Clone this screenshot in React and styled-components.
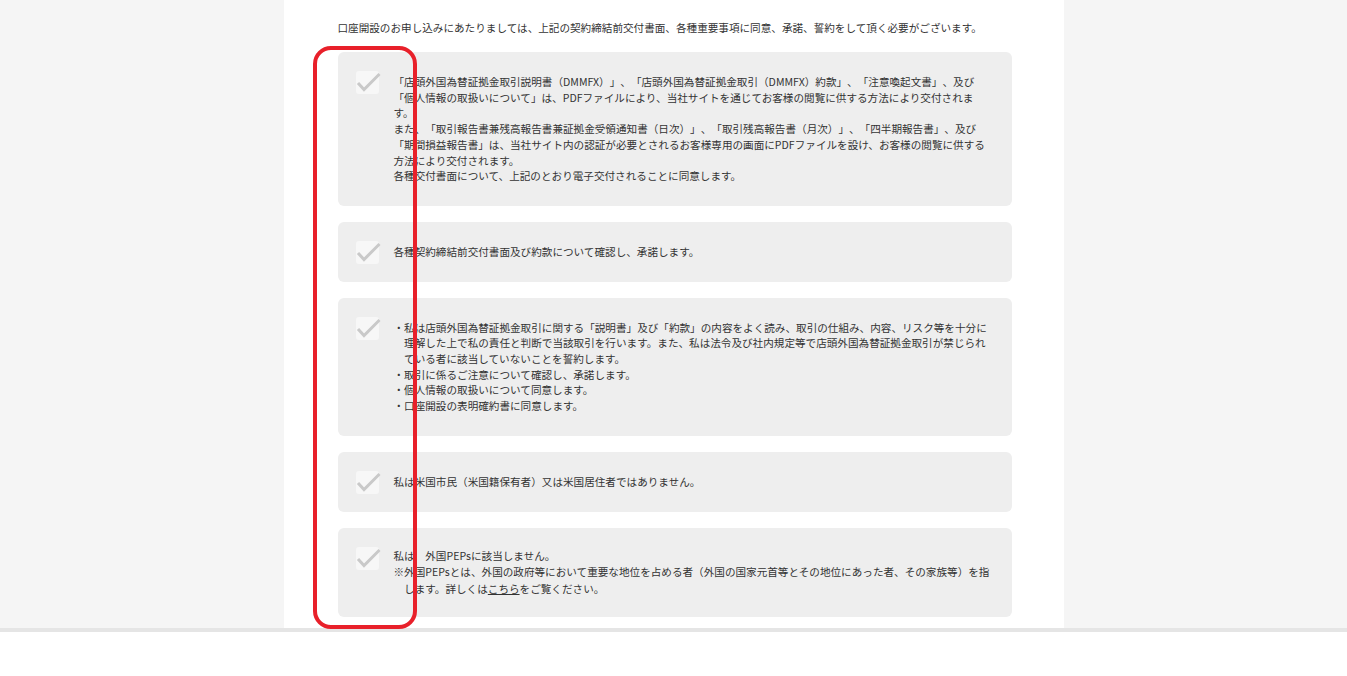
import { createGlobalStyle, styled } from "styled-components";

const Global = createGlobalStyle`
  body {
    margin: 0;
    background: #fff;
    font-family: "Noto Sans CJK JP", "Noto Sans", sans-serif;
    color: #333;
    text-spacing-trim: space-all;
  }
`;

const Page = styled.div`
  position: relative;
  min-height: 676px;
  background: #fff;
`;

const Stage = styled.div`
  height: 628px;
  background: #f5f5f5;
  border-bottom: 4px solid #e5e5e5;
  overflow: hidden;
`;

const Column = styled.main`
  width: 780px;
  height: 100%;
  margin: 0 auto;
  padding: 20px 52px 0 54px;
  box-sizing: border-box;
  background: #fff;
`;

const Lead = styled.p`
  margin: 0 0 16px;
  font-size: 10.6px;
  line-height: 16px;
  white-space: nowrap;
`;

const List = styled.div`
  display: flex;
  flex-direction: column;
  gap: 16px;
`;

const Card = styled.label`
  display: flex;
  align-items: flex-start;
  gap: 15px;
  padding: ${(p) => (p.$tight ? "20px" : "22px")} 20px ${(p) => (p.$tight ? "20px" : "22px")} 18px;
  background: #eeeeee;
  border-radius: 6px;
`;

const Box = styled.span`
  flex: 0 0 23px;
  height: 23px;
  margin-top: ${(p) => (p.$tight ? "-1px" : "-3px")};
  margin-bottom: -10px;
  border-radius: 3px;
  background: #f7f7f7;
  position: relative;
  svg {
    position: absolute;
    left: 0;
    top: 0;
    overflow: visible;
  }
`;

const Text = styled.div`
  font-size: 10.6px;
  line-height: ${(p) => p.$lh || "15.7px"};
  white-space: nowrap;
`;

const Bullets = styled.ul`
  margin: 0;
  padding: 0;
  list-style: none;
  li {
    padding-left: 1em;
    text-indent: -1em;
  }
`;

const Hang = styled.div`
  padding-left: 1em;
  text-indent: -1em;
`;

const Link = styled.a`
  color: #333;
  text-decoration: underline;
`;

const Marker = styled.div`
  position: absolute;
  left: 313px;
  top: 46px;
  width: 104px;
  height: 583px;
  box-sizing: border-box;
  border: 4px solid #e8202a;
  border-radius: 18px;
  pointer-events: none;
`;

const Check = ({ tight }) => (
  <Box $tight={tight}>
    <svg width="23" height="23" viewBox="0 0 23 23">
      <path d="M2 12 L8 18.5 L23.5 3" fill="none" stroke="#c9c9c9" strokeWidth="3" />
    </svg>
  </Box>
);

const App = () => {
  return (
    <Page>
      <Global />
      <Stage>
        <Column>
          <Lead>
            口座開設のお申し込みにあたりましては、上記の契約締結前交付書面、各種重要事項に同意、承諾、誓約をして頂く必要がございます。
          </Lead>
          <List>
            <Card>
              <Check />
              <Text>
                「店頭外国為替証拠金取引説明書（DMMFX）」、「店頭外国為替証拠金取引（DMMFX）約款」、「注意喚起文書」、及び
                <br />
                「個人情報の取扱いについて」は、PDFファイルにより、当社サイトを通じてお客様の閲覧に供する方法により交付されま
                <br />
                す。
                <br />
                また、「取引報告書兼残高報告書兼証拠金受領通知書（日次）」、「取引残高報告書（月次）」、「四半期報告書」、及び
                <br />
                「期間損益報告書」は、当社サイト内の認証が必要とされるお客様専用の画面にPDFファイルを設け、お客様の閲覧に供する
                <br />
                方法により交付されます。
                <br />
                各種交付書面について、上記のとおり電子交付されることに同意します。
              </Text>
            </Card>

            <Card>
              <Check />
              <Text>各種契約締結前交付書面及び約款について確認し、承諾します。</Text>
            </Card>

            <Card>
              <Check />
              <Text>
                <Bullets>
                  <li>
                    ・私は店頭外国為替証拠金取引に関する「説明書」及び「約款」の内容をよく読み、取引の仕組み、内容、リスク等を十分に
                    <br />
                    理解した上で私の責任と判断で当該取引を行います。また、私は法令及び社内規定等で店頭外国為替証拠金取引が禁じられ
                    <br />
                    ている者に該当していないことを誓約します。
                  </li>
                  <li>・取引に係るご注意について確認し、承諾します。</li>
                  <li>・個人情報の取扱いについて同意します。</li>
                  <li>・口座開設の表明確約書に同意します。</li>
                </Bullets>
              </Text>
            </Card>

            <Card>
              <Check />
              <Text>私は米国市民（米国籍保有者）又は米国居住者ではありません。</Text>
            </Card>

            <Card $tight>
              <Check tight />
              <Text $lh="16.5px">
                <div>私は　外国PEPsに該当しません。</div>
                <Hang>
                  ※外国PEPsとは、外国の政府等において重要な地位を占める者（外国の国家元首等とその地位にあった者、その家族等）を指
                  <br />
                  します。詳しくは<Link href="#">こちら</Link>をご覧ください。
                </Hang>
              </Text>
            </Card>
          </List>
        </Column>
      </Stage>
      <Marker />
    </Page>
  );
};

export default App;
